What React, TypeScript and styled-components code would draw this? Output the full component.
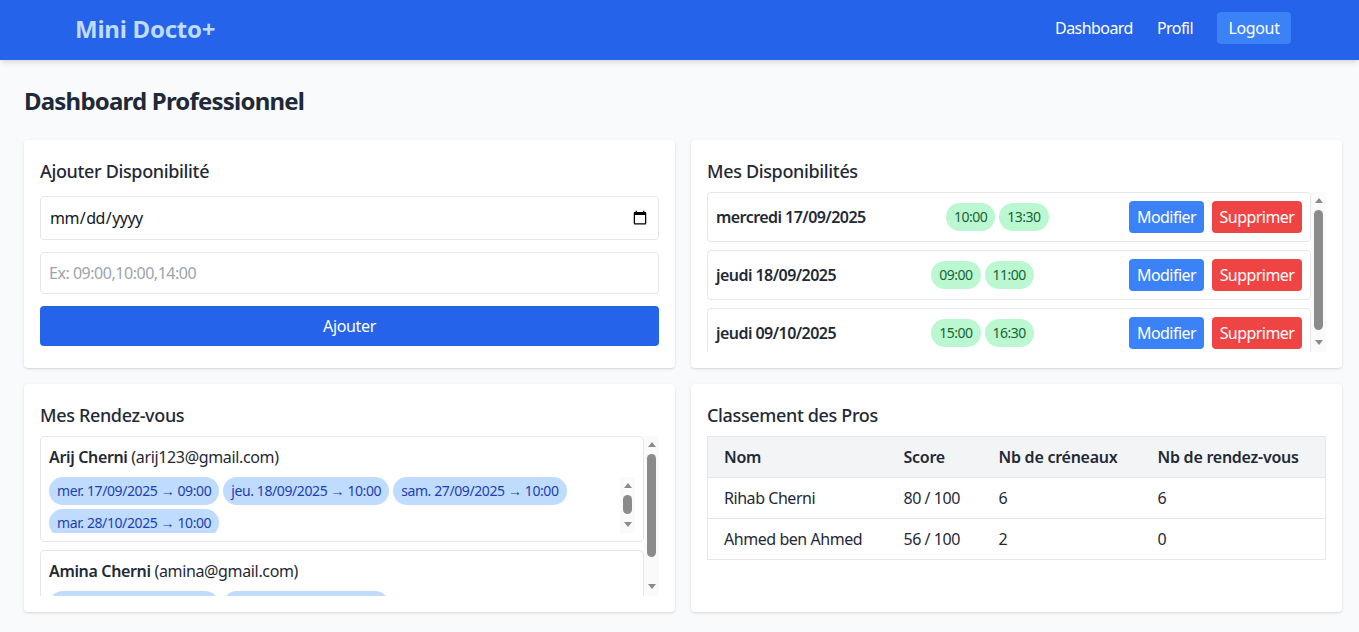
import React from 'react';
import styled, { createGlobalStyle } from 'styled-components';

const GlobalStyle = createGlobalStyle`
  * {
    box-sizing: border-box;
  }

  html, body {
    margin: 0;
    height: 100%;
    overflow: hidden;
  }

  body {
    background: #f9fafb;
    color: #1f2937;
    font-family: "Noto Sans", "Open Sans", Arial, sans-serif;
    font-size: 16px;
    line-height: 24px;
    letter-spacing: -0.35px;
  }
`;

const NavBar = styled.nav`
  height: 60px;
  padding: 0 68px 0 75px;
  display: flex;
  align-items: center;
  justify-content: space-between;
  background: #2563eb;
  box-shadow: 0 4px 6px -1px rgba(0, 0, 0, 0.1), 0 2px 4px -2px rgba(0, 0, 0, 0.1);
`;

const Logo = styled.div`
  margin-bottom: 2px;
  font-size: 24px;
  line-height: 32px;
  font-weight: 700;
  letter-spacing: -0.25px;
  color: #bfdbfe;
`;

const NavLinks = styled.div`
  margin-bottom: 4px;
  display: flex;
  align-items: center;
  gap: 24px;
`;

const NavLink = styled.a`
  color: #ffffff;
  letter-spacing: -0.55px;
`;

const LogoutButton = styled.button`
  height: 32px;
  width: 74px;
  padding: 0;
  border: 0;
  border-radius: 4px;
  background: #3b82f6;
  color: #ffffff;
  font: inherit;
  letter-spacing: inherit;
`;

const Main = styled.main`
  padding: 24px 17px 0 24px;
`;

const PageTitle = styled.h1`
  margin: 0 0 22px;
  font-size: 24px;
  line-height: 34px;
  font-weight: 700;
  letter-spacing: -0.8px;
  color: #1f2937;
`;

const Grid = styled.div`
  display: grid;
  grid-template-columns: 1fr 1fr;
  grid-auto-rows: 228px;
  gap: 16px;
`;

const Card = styled.section`
  padding: 16px;
  min-width: 0;
  background: #ffffff;
  border-radius: 4px;
  box-shadow: 0 1px 3px rgba(0, 0, 0, 0.13), 0 1px 2px -1px rgba(0, 0, 0, 0.1);
`;

const CardTitle = styled.h2<{ $spacing?: number }>`
  margin: 0 0 ${props => props.$spacing ?? 6}px;
  font-size: 18px;
  line-height: 30px;
  font-weight: 500;
  color: #1f2937;
`;

const Form = styled.form`
  display: flex;
  flex-direction: column;
  gap: 12px;
`;

const Input = styled.input<{ $height: number }>`
  width: 100%;
  height: ${props => props.$height}px;
  padding: 8px;
  border: 1px solid #e5e7eb;
  border-radius: 4px;
  background: #ffffff;
  color: #111827;
  font: inherit;
  letter-spacing: -0.55px;
  outline: none;

  &::placeholder {
    color: #9ca3af;
    letter-spacing: -0.47px;
  }
`;

const SubmitButton = styled.button`
  height: 40px;
  border: 0;
  border-radius: 4px;
  background: #2563eb;
  color: #ffffff;
  font: inherit;
  letter-spacing: inherit;
`;

const ScrollFrame = styled.div<{ $height: number }>`
  height: ${props => props.$height}px;
  display: flex;
`;

const ScrollContent = styled.div<{ $stack?: boolean }>`
  flex: 1;
  min-width: 0;
  overflow: hidden;
  ${props => props.$stack && `
    display: flex;
    flex-direction: column;
    gap: 8px;
  `}
`;

const ScrollTrack = styled.div`
  flex: none;
  width: 15px;
  display: flex;
  flex-direction: column;
  align-items: center;
  background: #fafafa;
`;

const ScrollButton = styled.div<{ $dir: 'up' | 'down' }>`
  flex: none;
  width: 15px;
  height: ${props => (props.$dir === 'up' ? 17 : 20)}px;
  margin-top: ${props => (props.$dir === 'down' ? 'auto' : '0')};
  display: flex;
  align-items: center;
  justify-content: center;

  &::before {
    content: '';
    width: 0;
    height: 0;
    border-left: 4.5px solid transparent;
    border-right: 4.5px solid transparent;
    ${props => (props.$dir === 'up' ? 'border-bottom' : 'border-top')}: 5px solid #8b8b8b;
  }
`;

const ScrollThumb = styled.div<{ $length: number }>`
  flex: none;
  width: 9px;
  height: ${props => props.$length}px;
  margin-top: 1px;
  border-radius: 5px;
  background: #8b8b8b;
`;

const SlotRow = styled.div`
  flex: none;
  height: 50px;
  padding: 0 8px;
  display: flex;
  align-items: center;
  justify-content: space-between;
  border: 1px solid #e5e7eb;
  border-radius: 4px;
`;

const SlotDate = styled.span`
  font-weight: 600;
  letter-spacing: -0.55px;
  color: #1f2937;
`;

const ChipGroup = styled.div`
  display: flex;
  gap: 4px;
`;

const TimeChip = styled.span`
  height: 28px;
  padding: 0 8px;
  display: flex;
  align-items: center;
  border-radius: 14px;
  background: #bbf7d0;
  color: #166534;
  font-size: 14px;
  letter-spacing: -0.5px;
`;

const ActionGroup = styled.div`
  display: flex;
  gap: 8px;
`;

const ActionButton = styled.button<{ $tone: 'blue' | 'red'; $width: number }>`
  width: ${props => props.$width}px;
  height: 32px;
  padding: 0;
  border: 0;
  border-radius: 4px;
  background: ${props => (props.$tone === 'blue' ? '#3b82f6' : '#ef4444')};
  color: #ffffff;
  font: inherit;
  letter-spacing: -0.55px;
`;

const AppointmentItem = styled.article`
  flex: none;
  padding: 8px;
  border: 1px solid #e5e7eb;
  border-radius: 4px;
`;

const Patient = styled.div`
  margin-bottom: 8px;

  strong {
    font-weight: 600;
  }
`;

const AppointmentChips = styled.div`
  display: flex;
  flex-wrap: wrap;
  align-content: flex-start;
  gap: 4px;
  padding-bottom: 4px;
`;

const AppointmentChip = styled.span`
  height: 28px;
  padding: 0 8px;
  display: flex;
  align-items: center;
  border-radius: 14px;
  background: #bfdbfe;
  color: #1e40af;
  font-size: 14px;
  letter-spacing: -0.4px;
  white-space: nowrap;
`;

const RankingTable = styled.table`
  width: 618px;
  table-layout: fixed;
  border-collapse: collapse;
  border: 1px solid #e5e7eb;
`;

const HeadCell = styled.th<{ $width: number }>`
  width: ${props => props.$width}px;
  height: 41px;
  padding: 0 16px;
  border-bottom: 1px solid #e5e7eb;
  background: #f3f4f6;
  text-align: left;
  font-weight: 600;
  letter-spacing: -0.25px;
  white-space: nowrap;
`;

const Cell = styled.td`
  height: 41px;
  padding: 0 16px;
  border-bottom: 1px solid #e5e7eb;
  letter-spacing: -0.45px;
  white-space: nowrap;
`;

const Scrollbar = ({ thumb }: { thumb: number }) => (
  <ScrollTrack>
    <ScrollButton $dir="up" />
    <ScrollThumb $length={thumb} />
    <ScrollButton $dir="down" />
  </ScrollTrack>
);

const slots = [
  { date: 'mercredi 17/09/2025', times: ['10:00', '13:30'] },
  { date: 'jeudi 18/09/2025', times: ['09:00', '11:00'] },
  { date: 'jeudi 09/10/2025', times: ['15:00', '16:30'] },
];

const appointments = [
  {
    name: 'Arij Cherni',
    email: 'arij123@gmail.com',
    chips: [
      'mer. 17/09/2025 → 09:00',
      'jeu. 18/09/2025 → 10:00',
      'sam. 27/09/2025 → 10:00',
      'mar. 28/10/2025 → 10:00',
    ],
  },
  {
    name: 'Amina Cherni',
    email: 'amina@gmail.com',
    chips: ['mer. 17/09/2025 → 10:00', 'jeu. 18/09/2025 → 09:00'],
  },
];

const ranking = [
  { name: 'Rihab Cherni', score: '80 / 100', slots: 6, appointments: 6 },
  { name: 'Ahmed ben Ahmed', score: '56 / 100', slots: 2, appointments: 0 },
];

export default function App() {
  return (
    <>
      <GlobalStyle />
      <NavBar>
        <Logo>Mini Docto+</Logo>
        <NavLinks>
          <NavLink>Dashboard</NavLink>
          <NavLink>Profil</NavLink>
          <LogoutButton>Logout</LogoutButton>
        </NavLinks>
      </NavBar>
      <Main>
        <PageTitle>Dashboard Professionnel</PageTitle>
        <Grid>
          <Card>
            <CardTitle $spacing={10}>Ajouter Disponibilité</CardTitle>
            <Form>
              <Input type="date" $height={44} />
              <Input type="text" $height={42} placeholder="Ex: 09:00,10:00,14:00" />
              <SubmitButton type="button">Ajouter</SubmitButton>
            </Form>
          </Card>
          <Card>
            <CardTitle>Mes Disponibilités</CardTitle>
            <ScrollFrame $height={160}>
              <ScrollContent $stack>
                {slots.map(slot => (
                  <SlotRow key={slot.date}>
                    <SlotDate>{slot.date}</SlotDate>
                    <ChipGroup>
                      {slot.times.map(time => (
                        <TimeChip key={time}>{time}</TimeChip>
                      ))}
                    </ChipGroup>
                    <ActionGroup>
                      <ActionButton $tone="blue" $width={75}>Modifier</ActionButton>
                      <ActionButton $tone="red" $width={90}>Supprimer</ActionButton>
                    </ActionGroup>
                  </SlotRow>
                ))}
              </ScrollContent>
              <Scrollbar thumb={120} />
            </ScrollFrame>
          </Card>
          <Card>
            <CardTitle>Mes Rendez-vous</CardTitle>
            <ScrollFrame $height={160}>
              <ScrollContent $stack>
                {appointments.map((item, index) => (
                  <AppointmentItem key={item.email}>
                    <Patient>
                      <strong>{item.name}</strong> ({item.email})
                    </Patient>
                    {index === 0 ? (
                      <ScrollFrame $height={56}>
                        <ScrollContent>
                          <AppointmentChips>
                            {item.chips.map(chip => (
                              <AppointmentChip key={chip}>{chip}</AppointmentChip>
                            ))}
                          </AppointmentChips>
                        </ScrollContent>
                        <Scrollbar thumb={19} />
                      </ScrollFrame>
                    ) : (
                      <AppointmentChips>
                        {item.chips.map(chip => (
                          <AppointmentChip key={chip}>{chip}</AppointmentChip>
                        ))}
                      </AppointmentChips>
                    )}
                  </AppointmentItem>
                ))}
              </ScrollContent>
              <Scrollbar thumb={103} />
            </ScrollFrame>
          </Card>
          <Card>
            <CardTitle>Classement des Pros</CardTitle>
            <RankingTable>
              <thead>
                <tr>
                  <HeadCell $width={180}>Nom</HeadCell>
                  <HeadCell $width={95}>Score</HeadCell>
                  <HeadCell $width={159}>Nb de créneaux</HeadCell>
                  <HeadCell $width={184}>Nb de rendez-vous</HeadCell>
                </tr>
              </thead>
              <tbody>
                {ranking.map(row => (
                  <tr key={row.name}>
                    <Cell>{row.name}</Cell>
                    <Cell>{row.score}</Cell>
                    <Cell>{row.slots}</Cell>
                    <Cell>{row.appointments}</Cell>
                  </tr>
                ))}
              </tbody>
            </RankingTable>
          </Card>
        </Grid>
      </Main>
    </>
  );
}
